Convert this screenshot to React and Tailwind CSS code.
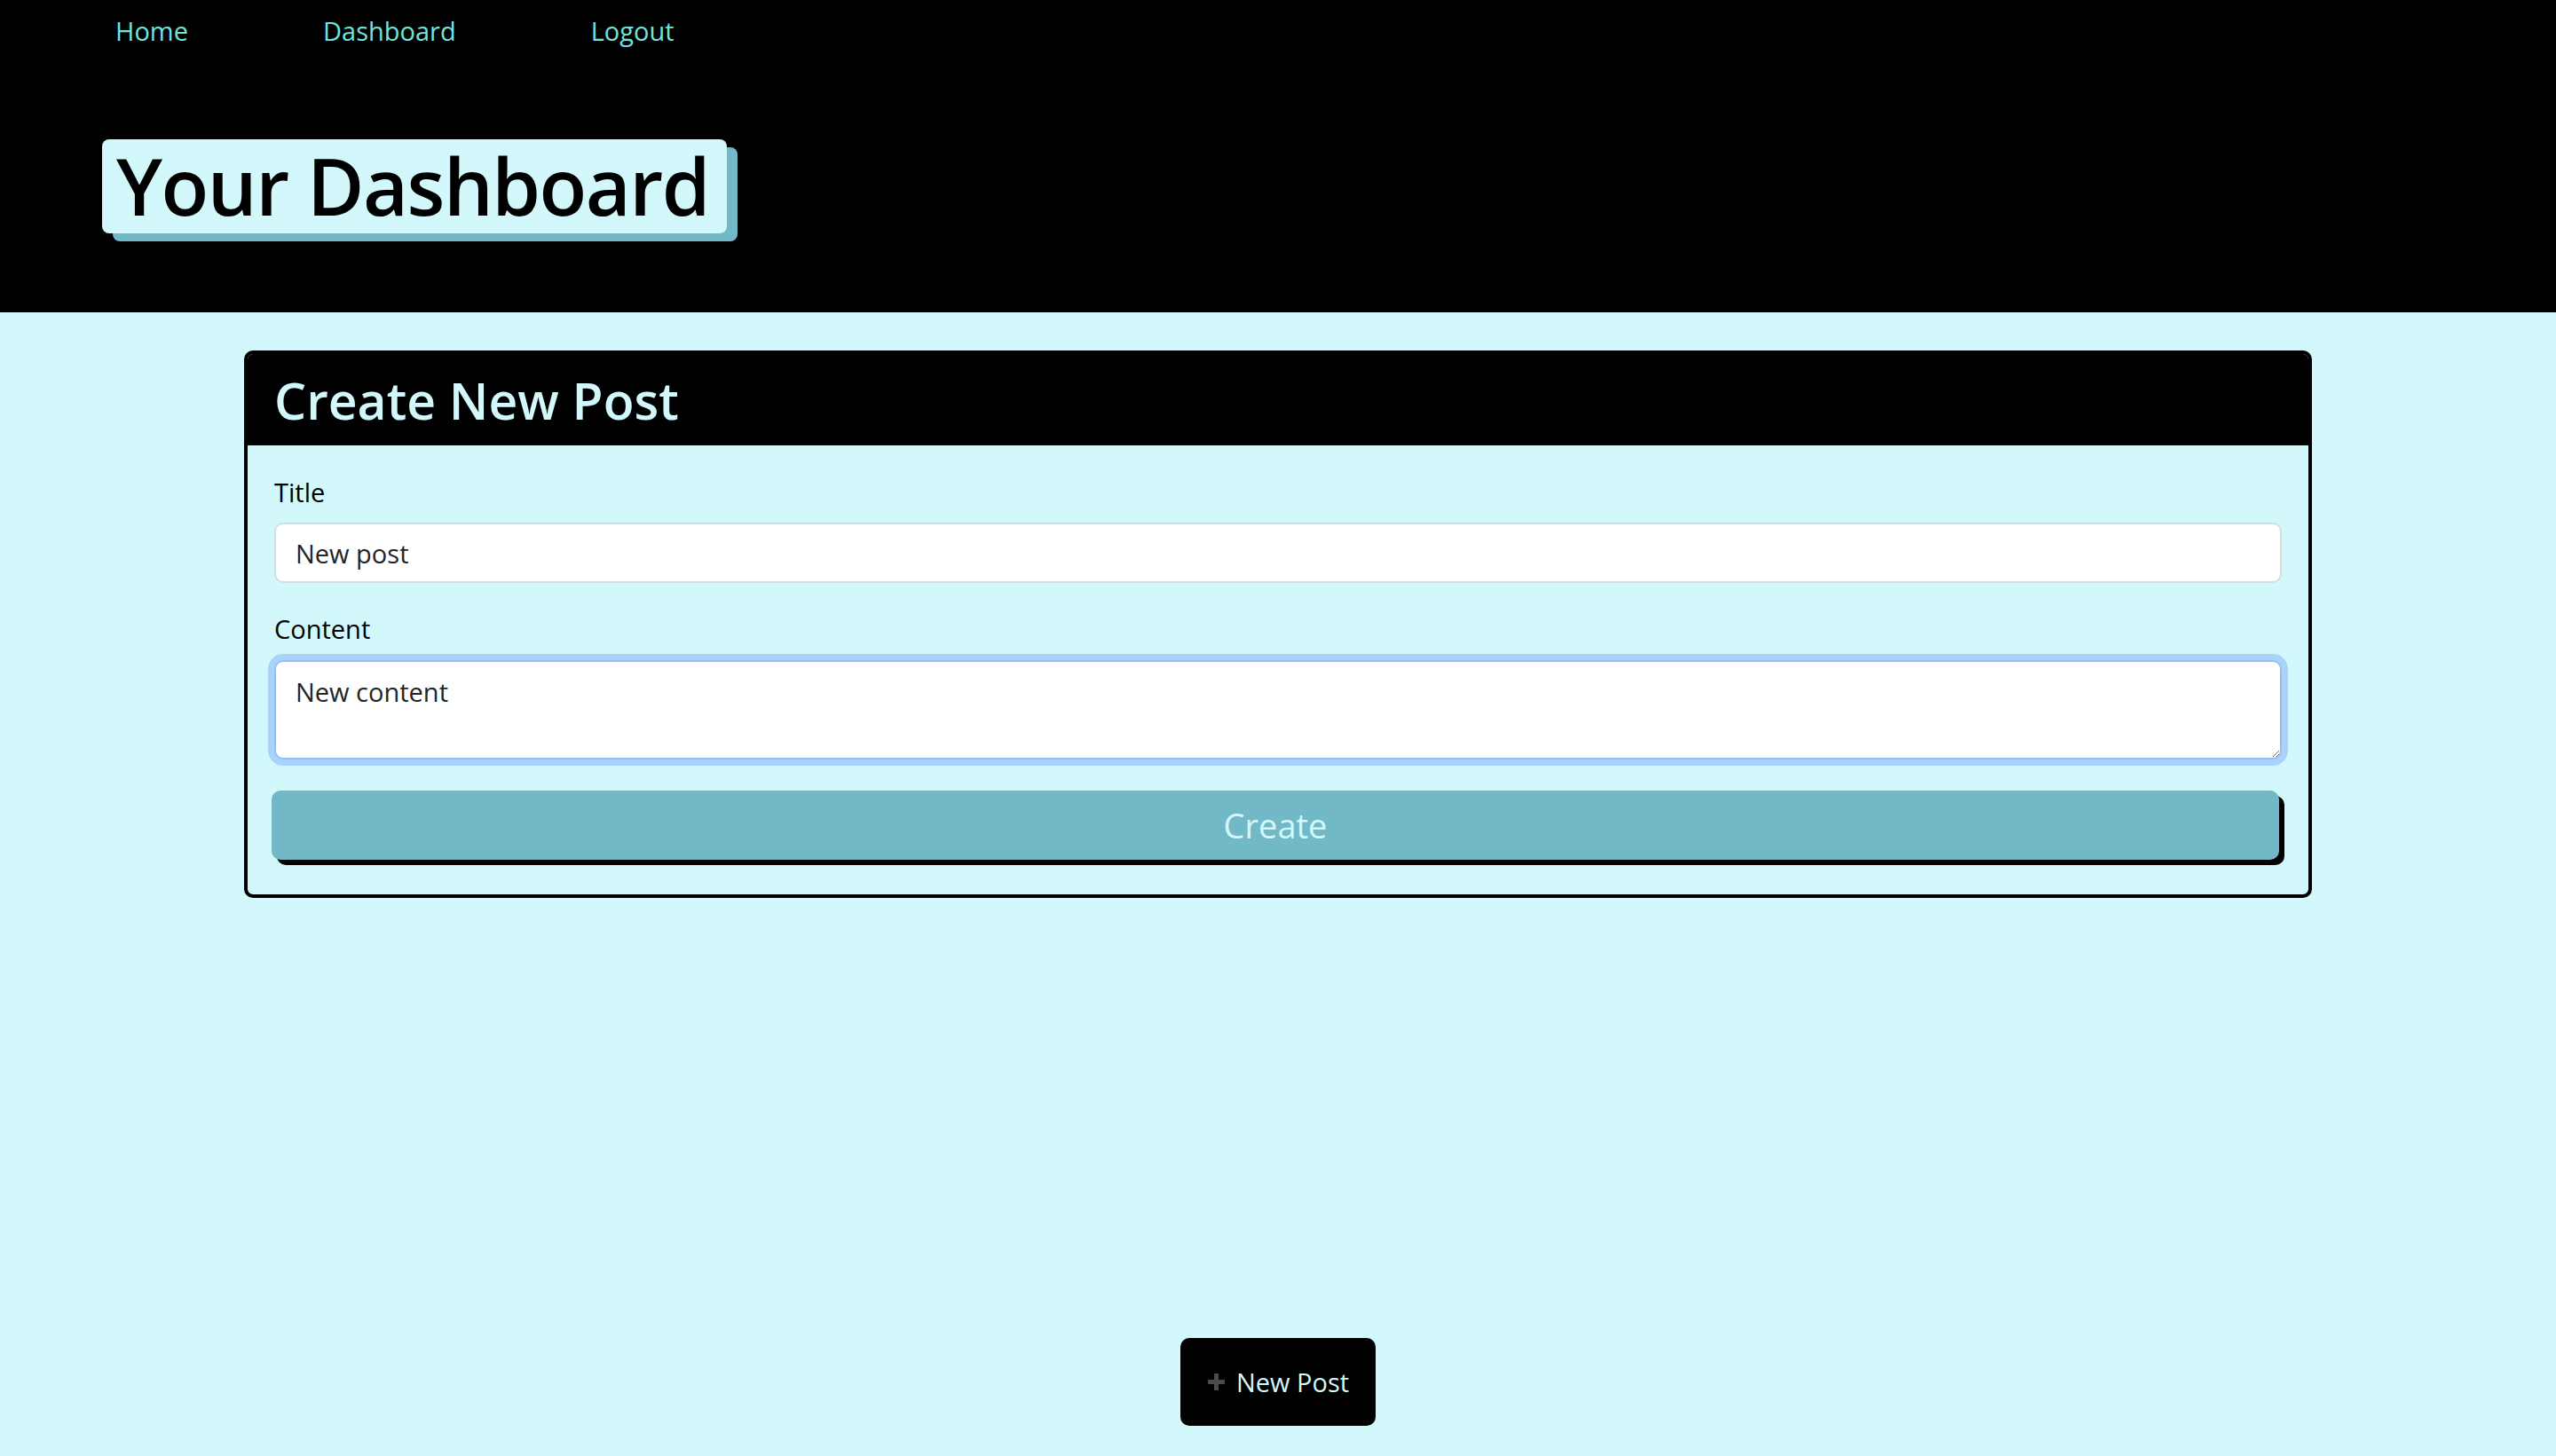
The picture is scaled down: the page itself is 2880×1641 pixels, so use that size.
import React, { useState, useEffect, useRef } from 'react';

const navLinks = ['Home', 'Dashboard', 'Logout'];

const Dashboard = () => {
  const [title, setTitle] = useState('New post');
  const [content, setContent] = useState('New content');
  const contentRef = useRef(null);

  // keep the caret at the end of the content box, like the user is typing
  useEffect(() => {
    const el = contentRef.current;
    if (el) {
      el.focus();
      el.setSelectionRange(el.value.length, el.value.length);
    }
  }, []);

  const handleSubmit = (e) => {
    e.preventDefault();
  };

  return (
    <div className="min-h-screen flex flex-col bg-[#d3f8fc] font-['Open_Sans',_'Noto_Sans',_sans-serif]">
      {/* header */}
      <header className="bg-black h-[352px]">
        <nav className="flex gap-[152px] pl-[130px] pt-[20px]">
          {navLinks.map((link) => (
            <a key={link} href="#" className="text-[29px] leading-none text-[#6fe4de]">
              {link}
            </a>
          ))}
        </nav>
        <div className="pl-[115px] mt-[108px]">
          <h1 className="inline-block bg-[#d3f8fc] rounded-[8px] pl-[16px] pr-[20px] pt-[8px] pb-[10px] text-[88px] leading-none font-semibold tracking-[-1.5px] text-black shadow-[12px_9px_0_0_#71b9c7]">
            Your Dashboard
          </h1>
        </div>
      </header>

      {/* create post card */}
      <main className="flex-1">
        <div className="mx-auto mt-[43px] w-[2330px] border-4 border-black rounded-[10px] overflow-hidden">
          <div className="bg-black px-[30px] pt-[24px] pb-[22px]">
            <h2 className="text-[57px] leading-none font-semibold text-[#d3f8fc]">Create New Post</h2>
          </div>
          <form onSubmit={handleSubmit} className="px-[30px] pt-[38px] pb-[39px]">
            <label htmlFor="title" className="block text-[29px] leading-none text-black mb-[20px]">
              Title
            </label>
            <input
              id="title"
              type="text"
              value={title}
              onChange={(e) => setTitle(e.target.value)}
              className="block w-full h-[68px] px-[22px] bg-white border-2 border-[#d3dde1] rounded-[10px] text-[29px] leading-none text-[#212529] focus:outline-none"
            />

            <label htmlFor="content" className="block text-[29px] leading-none text-black mt-[37px] mb-[21px]">
              Content
            </label>
            <textarea
              id="content"
              ref={contentRef}
              value={content}
              onChange={(e) => setContent(e.target.value)}
              className="block w-full h-[112px] px-[22px] pt-[19px] bg-white border-2 border-[#95bdf2] rounded-[10px] text-[29px] leading-none text-[#212529] caret-black shadow-[0_0_0_7px_#a9d3fa] focus:outline-none"
            />

            <button
              type="submit"
              className="block w-full h-[78px] mt-[35px] -translate-x-[3px] bg-[#71b9c7] rounded-[10px] text-[38px] leading-none text-[#d3f8fc] shadow-[6px_6px_0_0_#000]"
            >
              Create
            </button>
          </form>
        </div>
      </main>

      {/* footer */}
      <footer className="flex justify-center pb-[34px]">
        <button className="flex items-center justify-center gap-[12px] w-[220px] h-[99px] bg-black rounded-[10px]">
          <svg width="21" height="21" viewBox="0 0 21 21">
            <path d="M10.5 1v19M1 10.5h19" stroke="#4a4a4a" strokeWidth="5" />
          </svg>
          <span className="text-[29px] leading-none text-[#d3f8fc]">New Post</span>
        </button>
      </footer>
    </div>
  );
};

export default function App() {
  return <Dashboard />;
}
